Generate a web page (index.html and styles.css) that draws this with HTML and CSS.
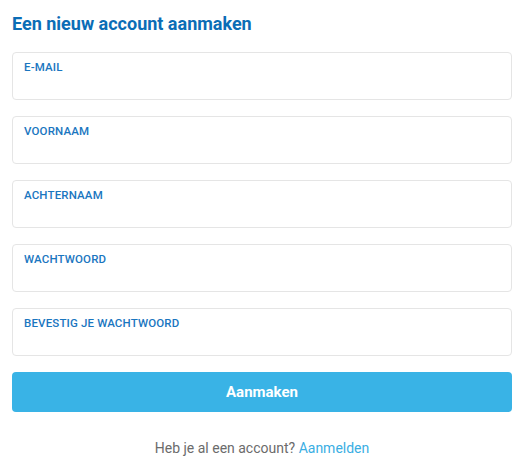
FILE: index.html
```html
<!DOCTYPE html>
<html lang="nl">
<head>
<meta charset="utf-8">
<title>Een nieuw account aanmaken</title>
<link rel="stylesheet" href="styles.css">
</head>
<body>
<main class="page">
  <h1 class="title">Een nieuw account aanmaken</h1>
  <form class="form">
    <label class="field">
      <span class="field-label">E-mail</span>
      <input class="field-input" type="email">
    </label>
    <label class="field">
      <span class="field-label">Voornaam</span>
      <input class="field-input" type="text">
    </label>
    <label class="field">
      <span class="field-label">Achternaam</span>
      <input class="field-input" type="text">
    </label>
    <label class="field">
      <span class="field-label">Wachtwoord</span>
      <input class="field-input" type="password">
    </label>
    <label class="field">
      <span class="field-label">Bevestig je wachtwoord</span>
      <input class="field-input" type="password">
    </label>
    <button class="submit" type="button">Aanmaken</button>
  </form>
  <p class="login">Heb je al een account? <a class="login-link" href="#">Aanmelden</a></p>
</main>
</body>
</html>
```

FILE: styles.css
```css
* { box-sizing: border-box; }
html, body { margin: 0; padding: 0; background: #ffffff; }
body { font-family: Roboto, "Liberation Sans", Arial, sans-serif; }

.page {
  padding: 12px 14px 0 12px;
  width: 526px;
}

.title {
  margin: 0;
  font-size: 18px;
  line-height: 24px;
  font-weight: 700;
  color: #0b6db6;
}

.form {
  margin-top: 16px;
  display: flex;
  flex-direction: column;
  gap: 16px;
}

.field {
  display: flex;
  flex-direction: column;
  height: 48px;
  border: 1px solid #e5e5e5;
  border-radius: 4px;
  padding: 6px 11px 0 11px;
  background: #fff;
}

.field-label {
  font-size: 11.5px;
  line-height: 16px;
  font-weight: 500;
  letter-spacing: 0.15px;
  text-transform: uppercase;
  color: #1a76bf;
}

.field-input {
  border: 0;
  outline: 0;
  padding: 0;
  height: 20px;
  font: inherit;
  font-size: 14px;
  background: transparent;
}

.submit {
  height: 40px;
  border: 0;
  border-radius: 4px;
  background: #39b3e6;
  color: #ffffff;
  font-family: inherit;
  font-size: 15px;
  font-weight: 700;
  cursor: pointer;
}

.login {
  margin: 26px 0 0 0;
  text-align: center;
  font-size: 14px;
  line-height: 20px;
  color: #6b6b6b;
}

.login-link {
  color: #3aaee3;
  text-decoration: none;
}
```
